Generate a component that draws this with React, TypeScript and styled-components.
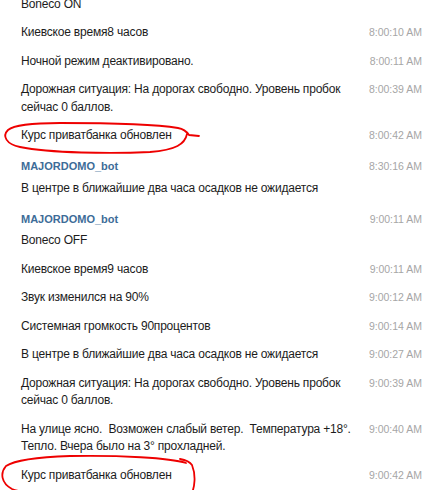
import styled, { createGlobalStyle } from "styled-components";

const GlobalStyle = createGlobalStyle`
  html, body {
    margin: 0;
    padding: 0;
    background: #ffffff;
    overflow: hidden;
  }
  body {
    font-family: "Liberation Sans", Arial, sans-serif;
  }
`;

const History = styled.div`
  width: 428px;
  margin-top: -10px;
  display: flex;
  flex-direction: column;
`;

const Row = styled.div<{ $marked?: boolean }>`
  position: ${(p) => (p.$marked ? "relative" : "static")};
  display: flex;
  justify-content: space-between;
  align-items: flex-start;
  padding: 5.5px 6px 5.5px 21px;
  line-height: 17.5px;
`;

const NameRow = styled(Row)`
  padding-top: 9px;
  padding-bottom: 0;
  line-height: 15px;
`;

const Author = styled.span`
  font-size: 11px;
  font-weight: bold;
  color: #3d6c98;
`;

const Text = styled.div`
  font-size: 12px;
  letter-spacing: -0.2px;
  color: #1c1c1c;
`;

const Time = styled.span`
  font-size: 10.5px;
  color: #a6a6a6;
  white-space: nowrap;
`;

const Scribble = styled.svg`
  position: absolute;
  left: 0;
  top: 0;
  width: 210px;
  height: 40px;
  overflow: visible;
  pointer-events: none;
  fill: none;
  stroke: #ee0000;
  stroke-width: 1.8;
  stroke-linecap: round;
  stroke-linejoin: round;
`;

type Msg =
  | { kind: "name"; name: string; time: string }
  | { kind: "msg"; lines: string[]; time?: string; circle?: 1 | 2 };

const items: Msg[] = [
  { kind: "msg", lines: ["Boneco ON"] },
  { kind: "msg", lines: ["Киевское время8 часов"], time: "8:00:10 AM" },
  { kind: "msg", lines: ["Ночной режим деактивировано."], time: "8:00:11 AM" },
  {
    kind: "msg",
    lines: ["Дорожная ситуация: На дорогах свободно. Уровень пробок", "сейчас 0 баллов."],
    time: "8:00:39 AM",
  },
  { kind: "msg", lines: ["Курс приватбанка обновлен"], time: "8:00:42 AM", circle: 1 },
  { kind: "name", name: "MAJORDOMO_bot", time: "8:30:16 AM" },
  { kind: "msg", lines: ["В центре в ближайшие два часа осадков не ожидается"] },
  { kind: "name", name: "MAJORDOMO_bot", time: "9:00:11 AM" },
  { kind: "msg", lines: ["Boneco OFF"] },
  { kind: "msg", lines: ["Киевское время9 часов"], time: "9:00:11 AM" },
  { kind: "msg", lines: ["Звук изменился на 90%"], time: "9:00:12 AM" },
  { kind: "msg", lines: ["Системная громкость 90процентов"], time: "9:00:14 AM" },
  { kind: "msg", lines: ["В центре в ближайшие два часа осадков не ожидается"], time: "9:00:27 AM" },
  {
    kind: "msg",
    lines: ["Дорожная ситуация: На дорогах свободно. Уровень пробок", "сейчас 0 баллов."],
    time: "9:00:39 AM",
  },
  {
    kind: "msg",
    lines: [
      "На улице ясно.\u00a0 Возможен слабый ветер.\u00a0 Температура +18°.",
      "Тепло. Вчера было на 3° прохладней.",
    ],
    time: "9:00:40 AM",
  },
  { kind: "msg", lines: ["Курс приватбанка обновлен"], time: "9:00:42 AM", circle: 2 },
];

// hand-drawn red loops around the two exchange-rate messages
const loops = {
  1: "M187 12 C185 22, 176 28, 150 30 C110 32, 50 31, 20 25 C6 22, 2 14, 8 8 C14 3, 30 1, 60 1 C110 1, 160 3, 178 6 C184 7, 187 10, 189 13 L199 14",
  2: "M186 2 C170 -3, 120 -6, 70 -5 C40 -4, 15 -1, 6 5 C0 12, 1 22, 12 28 C30 35, 90 37, 140 37 C170 37, 186 36, 191 34 C195 26, 196 14, 192 4 C190 1, 186 -1, 180 -2",
};

export default function App() {
  return (
    <>
      <GlobalStyle />
      <History>
        {items.map((it, i) =>
          it.kind === "name" ? (
            <NameRow key={i}>
              <Author>{it.name}</Author>
              <Time>{it.time}</Time>
            </NameRow>
          ) : (
            <Row key={i} $marked={!!it.circle}>
              <Text>
                {it.lines.map((l, j) => (
                  <div key={j}>{l}</div>
                ))}
              </Text>
              {it.time && <Time>{it.time}</Time>}
              {it.circle && (
                <Scribble viewBox="0 0 210 40">
                  <path d={loops[it.circle]} />
                </Scribble>
              )}
            </Row>
          )
        )}
      </History>
    </>
  );
}
